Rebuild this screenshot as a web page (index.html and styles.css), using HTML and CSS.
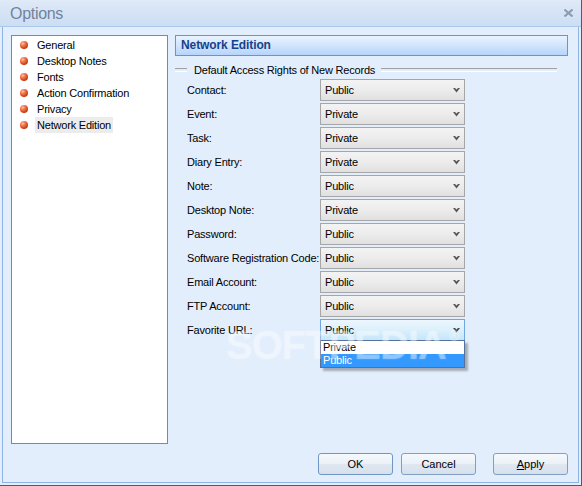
FILE: index.html
```html
<!DOCTYPE html>
<html>
<head>
<meta charset="utf-8">
<title>Options</title>
<link rel="stylesheet" href="styles.css">
</head>
<body>
<div class="window">
  <div class="titlebar">
    <span class="title">Options</span>
    <svg class="close" width="9" height="8" viewBox="0 0 9 8">
      <path d="M0.5 0.5 L8.5 7.5 M8.5 0.5 L0.5 7.5" stroke="#8a9bb2" stroke-width="2" fill="none"/>
    </svg>
  </div>
  <div class="frame">
    <div class="content">
      <ul class="nav">
        <li><span class="bullet"></span><span class="nav-text">General</span></li>
        <li><span class="bullet"></span><span class="nav-text">Desktop Notes</span></li>
        <li><span class="bullet"></span><span class="nav-text">Fonts</span></li>
        <li><span class="bullet"></span><span class="nav-text">Action Confirmation</span></li>
        <li><span class="bullet"></span><span class="nav-text">Privacy</span></li>
        <li><span class="bullet"></span><span class="nav-text selected">Network Edition</span></li>
      </ul>
      <div class="main">
        <div class="header">Network Edition</div>
        <div class="group"><span class="group-text">Default Access Rights of New Records</span></div>
        <div class="rows">
          <div class="row"><span class="label">Contact:</span><div class="combo"><span class="value">Public</span><svg class="chev" width="7" height="5" viewBox="0 0 7 5"><polygon points="0,0 2,0 3.5,1.6 5,0 7,0 3.5,4.5" fill="#555"/></svg></div></div>
          <div class="row"><span class="label">Event:</span><div class="combo"><span class="value">Private</span><svg class="chev" width="7" height="5" viewBox="0 0 7 5"><polygon points="0,0 2,0 3.5,1.6 5,0 7,0 3.5,4.5" fill="#555"/></svg></div></div>
          <div class="row"><span class="label">Task:</span><div class="combo"><span class="value">Private</span><svg class="chev" width="7" height="5" viewBox="0 0 7 5"><polygon points="0,0 2,0 3.5,1.6 5,0 7,0 3.5,4.5" fill="#555"/></svg></div></div>
          <div class="row"><span class="label">Diary Entry:</span><div class="combo"><span class="value">Private</span><svg class="chev" width="7" height="5" viewBox="0 0 7 5"><polygon points="0,0 2,0 3.5,1.6 5,0 7,0 3.5,4.5" fill="#555"/></svg></div></div>
          <div class="row"><span class="label">Note:</span><div class="combo"><span class="value">Public</span><svg class="chev" width="7" height="5" viewBox="0 0 7 5"><polygon points="0,0 2,0 3.5,1.6 5,0 7,0 3.5,4.5" fill="#555"/></svg></div></div>
          <div class="row"><span class="label">Desktop Note:</span><div class="combo"><span class="value">Private</span><svg class="chev" width="7" height="5" viewBox="0 0 7 5"><polygon points="0,0 2,0 3.5,1.6 5,0 7,0 3.5,4.5" fill="#555"/></svg></div></div>
          <div class="row"><span class="label">Password:</span><div class="combo"><span class="value">Public</span><svg class="chev" width="7" height="5" viewBox="0 0 7 5"><polygon points="0,0 2,0 3.5,1.6 5,0 7,0 3.5,4.5" fill="#555"/></svg></div></div>
          <div class="row"><span class="label">Software Registration Code:</span><div class="combo"><span class="value">Public</span><svg class="chev" width="7" height="5" viewBox="0 0 7 5"><polygon points="0,0 2,0 3.5,1.6 5,0 7,0 3.5,4.5" fill="#555"/></svg></div></div>
          <div class="row"><span class="label">Email Account:</span><div class="combo"><span class="value">Public</span><svg class="chev" width="7" height="5" viewBox="0 0 7 5"><polygon points="0,0 2,0 3.5,1.6 5,0 7,0 3.5,4.5" fill="#555"/></svg></div></div>
          <div class="row"><span class="label">FTP Account:</span><div class="combo"><span class="value">Public</span><svg class="chev" width="7" height="5" viewBox="0 0 7 5"><polygon points="0,0 2,0 3.5,1.6 5,0 7,0 3.5,4.5" fill="#555"/></svg></div></div>
          <div class="row"><span class="label">Favorite URL:</span><div class="combo focus"><span class="value">Public</span><svg class="chev" width="7" height="5" viewBox="0 0 7 5"><polygon points="0,0 2,0 3.5,1.6 5,0 7,0 3.5,4.5" fill="#444"/></svg>
            <div class="dropdown">
              <div class="option">Private</div>
              <div class="option active">Public</div>
            </div>
          </div></div>
        </div>
      </div>
    </div>
    <div class="footer">
      <button class="btn btn-ok">OK</button>
      <button class="btn btn-cancel">Cancel</button>
      <button class="btn"><u>A</u>pply</button>
    </div>
  </div>
  <div class="watermark">SOFTPEDIA<span class="reg">®</span></div>
</div>
</body>
</html>
```

FILE: styles.css
```css
* { box-sizing: border-box; }
html, body { margin: 0; padding: 0; }
body {
  width: 582px;
  height: 486px;
  overflow: hidden;
  font-family: "Liberation Sans", Arial, sans-serif;
  font-size: 11px;
  letter-spacing: -0.2px;
  color: #000;
  background: #e3eefc;
}
.window {
  position: relative;
  width: 582px;
  height: 486px;
  background: #e3eefd;
  border-right: 1px solid #3f5e88;
  border-bottom: 1px solid #3f5e88;
  display: flex;
  flex-direction: column;
}
.titlebar {
  height: 27px;
  flex: none;
  border-bottom: 1px solid #a9c9ef;
  background: linear-gradient(#e0eaf8, #d8e5f6 35%, #cddef3);
  display: flex;
  align-items: center;
  justify-content: space-between;
  padding: 0 8px 0 10px;
}
.title {
  font-size: 16px;
  color: #71839c;
  letter-spacing: -0.3px;
  padding-top: 1px;
}
.close { display: block; }
.frame {
  flex: 1;
  margin: 0 2px 2px 2px;
  border: 1px solid #8fb4e4;
  border-top: none;
  display: flex;
  flex-direction: column;
  padding: 8px 10px 7px 8px;
}
.content {
  display: flex;
  gap: 7px;
  height: 409px;
  flex: none;
}
.nav {
  width: 157px;
  height: 409px;
  flex: none;
  border: 1px solid #828790;
  background: #fff;
  margin: 0;
  padding: 1px 0 0 0;
  list-style: none;
}
.nav li {
  height: 16px;
  display: flex;
  align-items: center;
  padding-left: 8px;
}
.bullet {
  width: 8px;
  height: 8px;
  border-radius: 50%;
  background: radial-gradient(circle at 35% 30%, #ffc2a8 0, #f07a4e 30%, #d2451a 62%, #97300f 100%);
  margin-right: 7px;
  flex: none;
}
.nav-text {
  height: 16px;
  line-height: 16px;
  padding: 0 2px;
}
.nav-text.selected { background: #ececec; }
.main {
  flex: 1;
  display: flex;
  flex-direction: column;
}
.header {
  height: 21px;
  border: 1px solid #6d94c9;
  background: linear-gradient(#eaf3ff, #d2e5fc 50%, #b6d4fa);
  font-weight: bold;
  font-size: 12px;
  letter-spacing: -0.1px;
  color: #15428b;
  padding-left: 5px;
  line-height: 19px;
}
.group {
  display: flex;
  align-items: center;
  height: 12px;
  margin: 8px 11px 3px 0;
}
.group::before, .group::after {
  content: "";
  height: 2px;
  border-top: 1px solid #a0a0a0;
  border-bottom: 1px solid #fff;
}
.group::before { width: 12px; flex: none; }
.group::after { flex: 1; }
.group-text {
  padding: 0 6px 0 7px;
  line-height: 12px;
}
.rows { display: flex; flex-direction: column; }
.row {
  display: flex;
  align-items: center;
  height: 22px;
  margin-bottom: 2px;
  padding-left: 12px;
}
.label {
  width: 133px;
  flex: none;
  white-space: nowrap;
}
.combo {
  position: relative;
  width: 145px;
  height: 22px;
  flex: none;
  border: 1px solid #a6a6a6;
  background: linear-gradient(#f3f3f3, #ececec 50%, #e0e0e0);
  display: flex;
  align-items: center;
  padding-left: 4px;
}
.combo.focus {
  border-color: #6ea6e0;
  background: linear-gradient(#edf6fd, #dcf0fc 50%, #c4e6fb);
}
.value { flex: 1; }
.chev { display: block; margin-right: 4px; margin-top: 1px; }
.dropdown {
  position: absolute;
  top: 20px;
  left: -1px;
  width: 145px;
  height: 28px;
  border: 1px solid #55709a;
  background: #fff;
  box-shadow: 3px 3px 2px rgba(0, 0, 0, 0.28);
  z-index: 5;
}
.option {
  height: 13px;
  line-height: 13px;
  padding-left: 2px;
}
.option.active {
  background: #3399ff;
  color: #fff;
}
.footer {
  display: flex;
  justify-content: flex-end;
  margin-top: 9px;
  height: 22px;
}
.btn {
  width: 75px;
  height: 22px;
  padding: 0;
  border: 1px solid #7f9fc4;
  border-radius: 3px;
  background: linear-gradient(#f6f9fd, #ebf1f8 48%, #dfe7f1 52%, #d6e0ec);
  font-family: "Liberation Sans", Arial, sans-serif;
  font-size: 11px;
  color: #000;
}
.btn-ok { margin-right: 8px; border-color: #7196c6; }
.btn-cancel { margin-right: 17px; }
.watermark {
  position: absolute;
  left: 226px;
  top: 323px;
  font-family: "Liberation Sans", Arial, sans-serif;
  font-weight: bold;
  font-size: 40px;
  letter-spacing: -1px;
  color: rgba(255, 255, 255, 0.3);
  text-shadow: 0 0 2px rgba(255, 255, 255, 0.25);
  z-index: 10;
  pointer-events: none;
}
.reg {
  font-size: 14px;
  vertical-align: 18px;
  margin-left: 3px;
}
```
